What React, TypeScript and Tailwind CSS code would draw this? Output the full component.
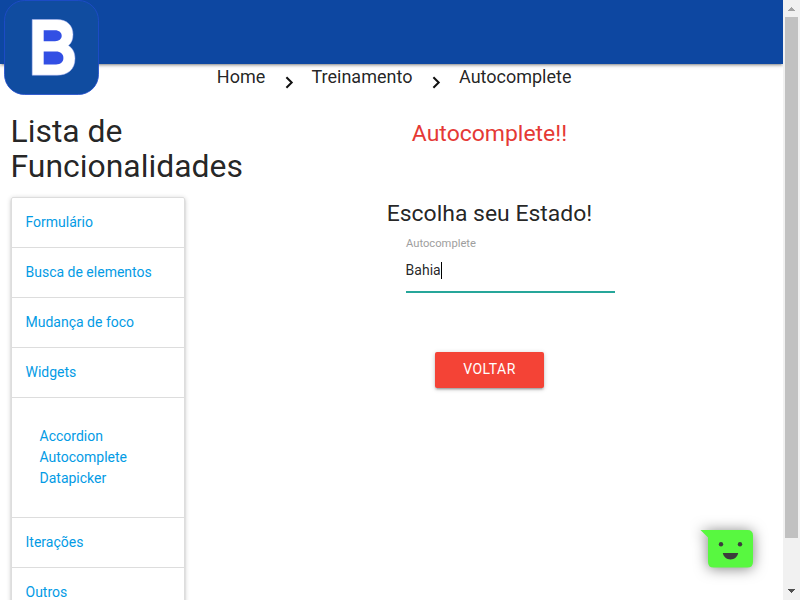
import React from 'react';

const sideLink = 'flex h-[50px] shrink-0 items-center border-b border-[#ddd] pl-[14px] text-[#039be5]';

function Logo() {
  return (
    <svg className="absolute left-1 top-0 z-10" width="96" height="96" viewBox="4 0 96 96">
      <rect x="4.5" y="0.5" width="94" height="94" rx="20" fill="#104ca0" stroke="#214bce" strokeWidth="0.8" />
      <path
        fillRule="evenodd"
        fill="#fff"
        stroke="#a9b2f4"
        strokeWidth="0.5"
        d="M32.2 19.5H57C67 19.5 73 25.5 73 34.5C73 39.5 71.5 43 68.5 45.5C73 48.500 75 53 75 58.500C75 69.500 68 75.200 57 75.200H32.200Z"
      />
      <path fill="#324fe4" d="M43.700 30.200H55C59 30.200 61.700 32.500 61.700 35.800C61.700 39 59 41.200 55 41.200H43.700Z" />
      <path fill="#324fe4" d="M43.700 51.500H56C60.500 51.500 63.400 54 63.400 58C63.400 62 60.500 64.400 56 64.400H43.700Z" />
    </svg>
  );
}

function Chevron() {
  return (
    <svg className="mt-[13px] shrink-0" width="9" height="13" viewBox="0 0 9 13">
      <path d="M1.400 1.200L6.700 6.500L1.400 11.800" fill="none" stroke="#111" strokeWidth="2" />
    </svg>
  );
}

function Scrollbar() {
  return (
    <div className="flex h-full w-[17px] shrink-0 flex-col items-center bg-[#f1f1f1]">
      <svg width="17" height="17" viewBox="0 0 17 17" shapeRendering="crispEdges">
        <path d="M8 7h1v1h1v1h1v1h1v1H5v-1h1V9h1V8h1z" fill="#a3a3a3" />
      </svg>
      <div className="h-[521px] w-[13px] bg-[#c1c1c1]" />
      <svg className="mt-auto" width="17" height="17" viewBox="0 0 17 17" shapeRendering="crispEdges">
        <path d="M5 6h7v1h-1v1h-1v1H9v1H8V9H7V8H6V7H5z" fill="#505050" />
      </svg>
    </div>
  );
}

function ChatBubble() {
  return (
    <svg className="absolute left-[690px] top-[515px]" width="80" height="70" viewBox="0 0 80 70">
      <path
        className="drop-shadow-[0_1px_7px_rgba(0,0,0,0.5)]"
        d="M10.500 15H57.500Q63 15 63 20.500V47Q63 52.500 57.500 52.500H23.500Q18 52.500 18 47V22.500Z"
        fill="#58f840"
      />
      <circle cx="31" cy="29.300" r="2.200" fill="#3c3c3c" />
      <circle cx="50" cy="29.300" r="2.200" fill="#3c3c3c" />
      <path d="M32.800 38H48.200C47.300 42 44.400 44.400 40.500 44.400S33.700 42 32.800 38Z" fill="#3c3c3c" />
    </svg>
  );
}

export default function App() {
  return (
    <div className="relative flex h-[600px] w-[800px] overflow-hidden bg-white font-[Roboto,sans-serif] text-[14px] leading-[21px] text-black/87">
      <div className="flex h-full w-[783px] flex-col overflow-hidden">
        <nav className="h-16 shrink-0 bg-[#0d47a1] shadow-[0_2px_2px_0_rgba(0,0,0,0.14),0_3px_1px_-2px_rgba(0,0,0,0.12),0_1px_5px_0_rgba(0,0,0,0.2)]" />
        <Logo />
        <div className="-mt-px flex h-[43px] shrink-0 items-start pl-[216.800px] text-[18px] leading-[27px]">
          <span className="w-[68.200px]">Home</span>
          <Chevron />
          <span className="ml-[17.500px] w-[120.500px]">Treinamento</span>
          <Chevron />
          <span className="ml-[18px]">Autocomplete</span>
        </div>
        <div className="flex min-h-0 flex-1">
          <aside className="flex w-[255px] shrink-0 flex-col pl-[10.500px] pt-[8px]">
            <h4 className="text-[31.920px] leading-[35.100px]">
              Lista de
              <br />
              Funcionalidades
            </h4>
            <div className="mt-[13px] flex w-[174.400px] shrink-0 flex-col rounded-[2px] border border-[#ddd] shadow-[0_2px_2px_0_rgba(0,0,0,0.14),0_3px_1px_-2px_rgba(0,0,0,0.12),0_1px_5px_0_rgba(0,0,0,0.2)]">
              <a className={sideLink}>Formulário</a>
              <a className={sideLink}>Busca de elementos</a>
              <a className={sideLink}>Mudança de foco</a>
              <a className={sideLink}>Widgets</a>
              <div className="flex h-[120px] flex-col border-b border-[#ddd] pl-7 pt-[28px] text-[#039be5]">
                <a>Accordion</a>
                <a>Autocomplete</a>
                <a>Datapicker</a>
              </div>
              <a className={sideLink}>Iterações</a>
              <a className={sideLink}>Outros</a>
            </div>
          </aside>
          <main className="flex w-[469px] flex-col items-center">
            <h5 className="mt-[15px] text-[22.960px] leading-[25.300px] text-[#e53935]">Autocomplete!!</h5>
            <h5 className="mt-[55px] text-[22.960px] leading-[25.300px]">Escolha seu Estado!</h5>
            <div className="ml-[42px] mt-[8px] flex w-[209px] flex-col">
              <label className="text-[11.200px] leading-[17px] text-[#9e9e9e]">Autocomplete</label>
              <div className="flex h-[41px] items-center border-b-2 border-[#26a69a] pb-[2px]">
                <span className="-ml-[0.400px]">Bahia</span>
                <span className="h-[17px] w-px bg-black" />
              </div>
            </div>
            <button className="mt-[59px] h-9 w-[109px] rounded-[2px] bg-[#f44336] pb-px text-[14px] leading-[35px] tracking-[0.5px] text-white shadow-[0_2px_2px_0_rgba(0,0,0,0.14),0_3px_1px_-2px_rgba(0,0,0,0.12),0_1px_5px_0_rgba(0,0,0,0.2)]">
              VOLTAR
            </button>
          </main>
        </div>
      </div>
      <Scrollbar />
      <ChatBubble />
    </div>
  );
}
